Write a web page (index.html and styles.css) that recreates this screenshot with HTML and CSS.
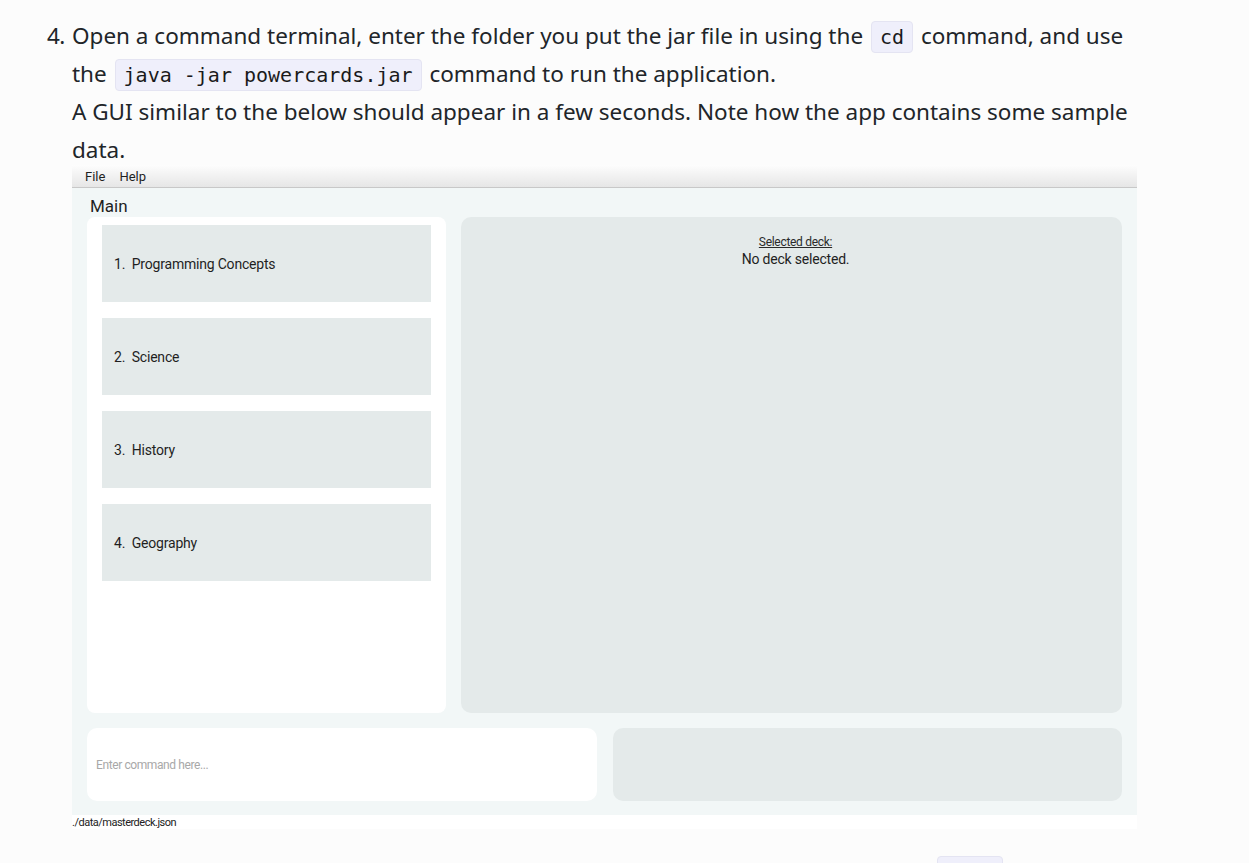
FILE: index.html
```html
<!DOCTYPE html>
<html lang="en">
<head>
<meta charset="utf-8">
<title>PowerCards User Guide</title>
<link rel="stylesheet" href="styles.css">
</head>
<body>
<ol class="steps">
  <li class="step">
    <span class="num">4.</span>
    <div class="step-body">
      <p class="para">Open a command terminal, enter the folder you put the jar file in using the <code class="code">cd</code> command, and use the <code class="code">java -jar powercards.jar</code> command to run the application.<br>A GUI similar to the below should appear in a few seconds. Note how the app contains some sample data.</p>
      <div class="gui">
        <div class="menubar">
          <span class="menu-item">File</span>
          <span class="menu-item">Help</span>
        </div>
        <div class="gui-main">
          <div class="gui-title">Main</div>
          <div class="top-row">
            <div class="deck-list">
              <div class="deck-card">1.&nbsp; Programming Concepts</div>
              <div class="deck-card">2.&nbsp; Science</div>
              <div class="deck-card">3.&nbsp; History</div>
              <div class="deck-card">4.&nbsp; Geography</div>
            </div>
            <div class="deck-view">
              <div class="deck-view-label">Selected deck:</div>
              <div class="deck-view-name">No deck selected.</div>
            </div>
          </div>
          <div class="bottom-row">
            <div class="command-box">Enter command here...</div>
            <div class="result-box"></div>
          </div>
        </div>
        <div class="statusbar">./data/masterdeck.json</div>
      </div>
    </div>
  </li>
  <li class="step">
    <span class="num">5.</span>
    <div class="step-body">
      <p class="para">Type the command in the command box and press Enter to execute it. e.g. typing <code class="code">help</code> and pressing Enter will open the help window.</p>
    </div>
  </li>
</ol>
</body>
</html>
```
FILE: styles.css
```css
html, body {
  margin: 0;
  padding: 0;
  background: #fcfcfc;
}

body {
  font-family: "Noto Sans", "Open Sans", sans-serif;
  color: #212529;
  overflow: hidden;
  height: 863px;
}

.steps {
  list-style: none;
  margin: 0;
  padding: 17px 0 0 47px;
  width: 1093px;
}

.step {
  display: flex;
}

.step + .step {
  margin-top: 23px;
}

.num {
  width: 25px;
  flex: none;
  font-size: 22.5px;
  line-height: 38px;
  letter-spacing: -0.5px;
}

.step-body {
  flex: 1;
  min-width: 0;
}

.para {
  margin: 0;
  font-size: 22.5px;
  line-height: 38px;
}

.code {
  display: inline-block;
  font-family: "DejaVu Sans Mono", "Liberation Mono", monospace;
  font-size: 20px;
  line-height: 24px;
  padding: 3px 8px;
  margin: 0 2px;
  background: #efeffb;
  border: 1px solid #e4e4f2;
  border-radius: 4px;
  color: #1a1a1a;
}

.gui {
  width: 1065px;
  margin-top: -4px;
  font-family: Roboto, "Liberation Sans", sans-serif;
  color: #1f1f1f;
}

.menubar {
  height: 22px;
  display: flex;
  align-items: center;
  gap: 14px;
  padding-left: 13px;
  background: linear-gradient(#fdfdfd, #e6e6e6);
  border-bottom: 1px solid #c8c8c8;
  font-size: 13px;
}

.gui-main {
  background: #f2f7f7;
  padding: 0 15px 14px;
}

.gui-title {
  height: 29px;
  padding-left: 3px;
  font-size: 17px;
  line-height: 37px;
  box-sizing: border-box;
}

.top-row {
  display: grid;
  grid-template-columns: 359px 661px;
  gap: 15px;
  height: 496px;
}

.deck-list {
  background: #ffffff;
  border-radius: 8px;
  padding: 8px 15px;
  display: flex;
  flex-direction: column;
  gap: 16px;
}

.deck-card {
  height: 77px;
  background: #e4eaea;
  display: flex;
  align-items: center;
  padding-left: 12px;
  font-size: 14px;
  letter-spacing: -0.2px;
}

.deck-view {
  background: #e4eaea;
  border-radius: 10px;
  padding: 18px 0 0 8px;
  text-align: center;
}

.deck-view-label {
  font-size: 12px;
  line-height: 14px;
  text-decoration: underline;
  letter-spacing: -0.3px;
  color: #2a2a2a;
}

.deck-view-name {
  font-size: 14px;
  line-height: 20px;
  letter-spacing: -0.2px;
}

.bottom-row {
  display: grid;
  grid-template-columns: 510px 509px;
  gap: 16px;
  margin-top: 15px;
  height: 73px;
}

.command-box {
  background: #ffffff;
  border-radius: 10px;
  display: flex;
  align-items: center;
  padding-left: 9px;
  font-size: 12px;
  color: #a8a8a8;
  letter-spacing: -0.4px;
}

.result-box {
  background: #e4eaea;
  border-radius: 10px;
}

.statusbar {
  height: 14px;
  background: #ffffff;
  font-size: 11px;
  line-height: 16px;
  letter-spacing: -0.5px;
  color: #222;
}
```
